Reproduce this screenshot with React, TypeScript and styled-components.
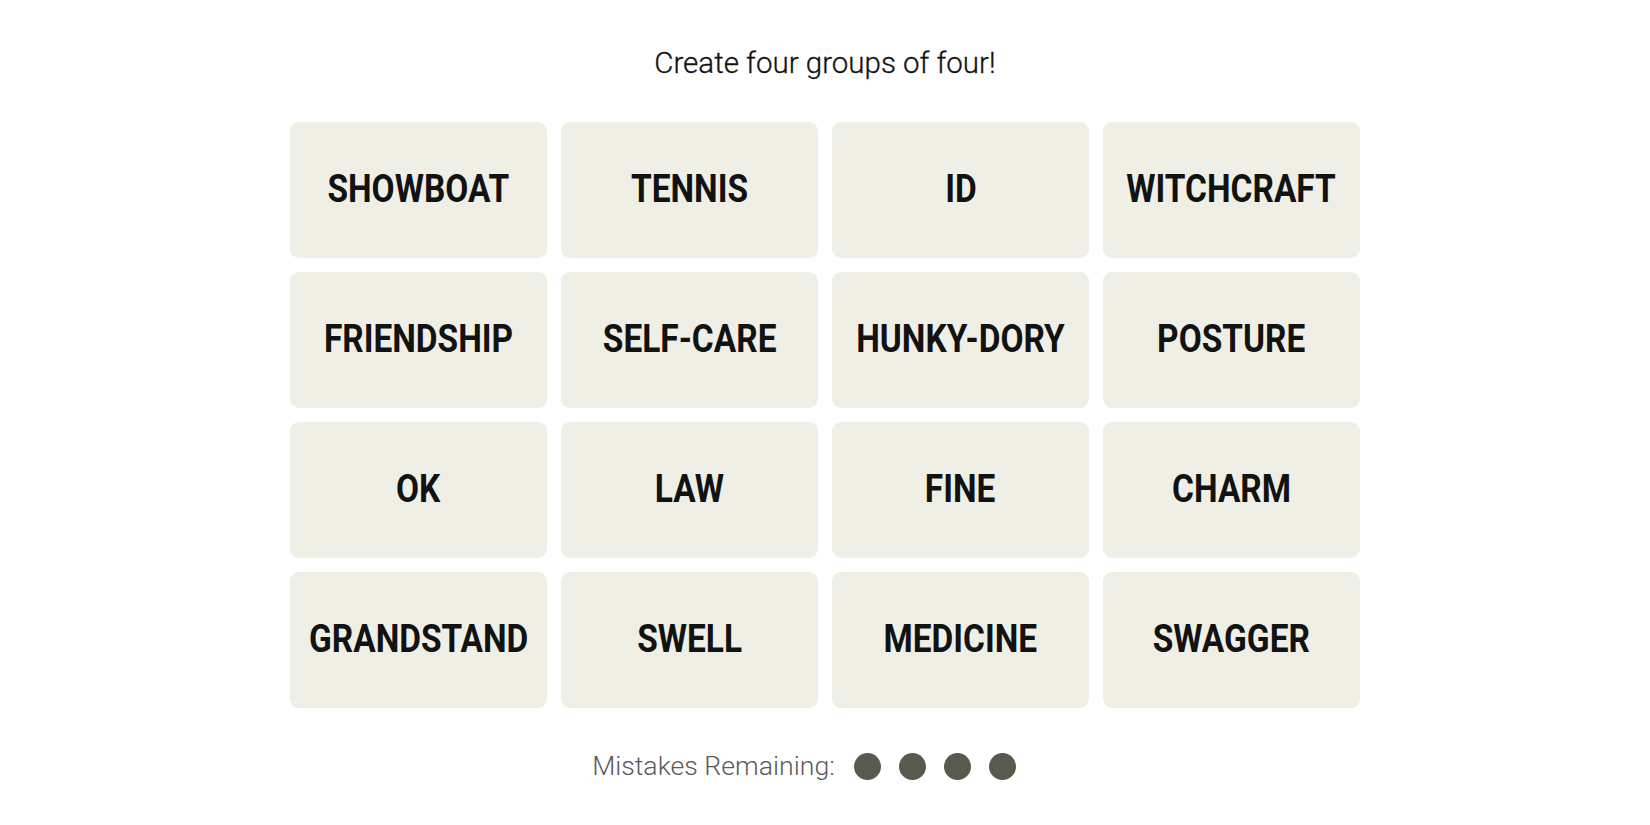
import React from "react";
import styled, { createGlobalStyle } from "styled-components";

const GlobalStyle = createGlobalStyle`
  html, body {
    margin: 0;
    padding: 0;
    background: #ffffff;
  }
`;

const Page = styled.div`
  display: flex;
  flex-direction: column;
  align-items: center;
  width: 1650px;
  height: 825px;
  padding-top: 45px;
  box-sizing: border-box;
  font-family: Roboto, "Liberation Sans", sans-serif;
  color: #121212;
`;

const Title = styled.div`
  font-size: 29.5px;
  font-weight: 300;
  line-height: 36px;
  height: 36px;
  -webkit-text-stroke: 0.3px #121212;
`;

const Board = styled.div`
  display: grid;
  grid-template-columns: repeat(4, 257px);
  grid-auto-rows: 136px;
  gap: 14px;
  margin-top: 41px;
`;

const Tile = styled.button`
  display: flex;
  align-items: center;
  justify-content: center;
  border: none;
  border-radius: 9px;
  background: #efefe6;
  color: #121212;
  font-family: Roboto, "Liberation Sans", sans-serif;
  font-weight: 700;
  font-size: 38px;
  padding: 0 0 3px;
  cursor: pointer;
`;

// franklin bold is narrower than anything installed, so squeeze a little
const Label = styled.span`
  display: inline-block;
  white-space: nowrap;
  transform: scaleX(0.88);
`;

const Mistakes = styled.div`
  display: flex;
  align-items: center;
  margin-top: 42px;
  padding-right: 42px;
  font-size: 26.7px;
  font-weight: 300;
  color: #5a5a5a;
`;

const Dots = styled.div`
  display: flex;
  gap: 18px;
  margin-left: 19px;
`;

const Dot = styled.span`
  width: 27px;
  height: 27px;
  border-radius: 50%;
  background: #5a594e;
`;

const words = [
  "SHOWBOAT", "TENNIS", "ID", "WITCHCRAFT",
  "FRIENDSHIP", "SELF-CARE", "HUNKY-DORY", "POSTURE",
  "OK", "LAW", "FINE", "CHARM",
  "GRANDSTAND", "SWELL", "MEDICINE", "SWAGGER",
];

export default function App() {
  return (
    <>
      <GlobalStyle />
      <Page>
        <Title>Create four groups of four!</Title>
        <Board>
          {words.map((w) => (
            <Tile key={w}>
              <Label>{w}</Label>
            </Tile>
          ))}
        </Board>
        <Mistakes>
          Mistakes Remaining:
          <Dots>
            {[0, 1, 2, 3].map((i) => (
              <Dot key={i} />
            ))}
          </Dots>
        </Mistakes>
      </Page>
    </>
  );
}
